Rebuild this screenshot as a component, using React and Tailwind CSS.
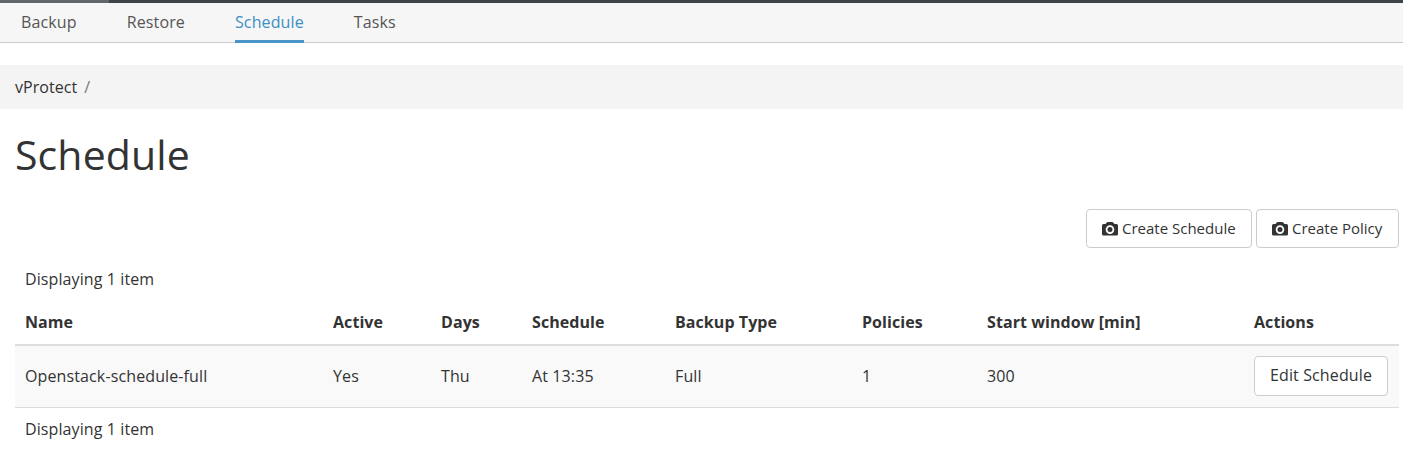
import React from "react";

const Camera = () => (
  <svg viewBox="0 0 16 14" className="mr-1 h-[14px] w-4 shrink-0" fill="#333">
    <path fillRule="evenodd" d="M1.500 2H3.600L4.700.6Q5.100 0 5.800 0h4.400q.7 0 1.100.6L12.400 2h2.100Q16 2 16 3.500v8.500q0 1.500-1.500 1.500h-13Q0 13.500 0 12V3.500Q0 2 1.500 2ZM8 3.300a4.300 4.300 0 1 0 0 8.600a4.300 4.300 0 1 0 0-8.600ZM8 5.100a2.500 2.500 0 1 1 0 5a2.500 2.500 0 1 1 0-5Z" />
  </svg>
);

const tabs = ["Backup", "Restore", "Schedule", "Tasks"];
const cols = [
  ["Name", "Openstack-schedule-full"],
  ["Active", "Yes"],
  ["Days", "Thu"],
  ["Schedule", "At 13:35"],
  ["Backup Type", "Full"],
  ["Policies", "1"],
  ["Start window [min]", "300"],
];
const grid = "grid grid-cols-[308px_108px_91px_143px_187px_125px_267px_1fr] pl-[10px]";
const button = "flex items-center rounded-[4px] border border-[#ccc] bg-white whitespace-nowrap";

export default function App() {
  return (
    <div className="h-[452px] overflow-hidden bg-white font-['Open_Sans',sans-serif] text-[16px] text-[#333]">
      <div className="flex h-[3px] bg-[#3e4449]">
        <div className="w-[109px] bg-[#636669]" />
      </div>
      <nav className="flex h-10 gap-[50px] border-b border-[#ccc] bg-[#f6f6f6] pl-[21px] tracking-[0.13px] text-[#555]">
        {tabs.map((t) => (
          <a
            key={t}
            className={
              t === "Schedule"
                ? "h-10 border-b-[3px] border-[#4795c9] leading-[38px] text-[#3b8fc4]"
                : "h-10 leading-[38px]"
            }
          >
            {t}
          </a>
        ))}
      </nav>
      <div className="mt-[22px] flex h-11 items-center gap-[7px] bg-[#f4f4f4] pl-[15px]">
        <span className="tracking-[0.05px]">vProtect</span>
        <span className="text-[#777]">/</span>
      </div>
      <main className="pr-1 pl-[15px]">
        <h1 className="mt-5 h-[50px] text-[41px] leading-[50px] tracking-[0.12px]">Schedule</h1>
        <div className="mt-[30px] flex justify-end gap-1 text-[15px]">
          <button className={`${button} h-[39px] w-[166px] pl-[15px]`}><Camera />Create Schedule</button>
          <button className={`${button} h-[39px] w-[143px] pl-[15px]`}><Camera />Create Policy</button>
        </div>
        <div className="mt-[15px] h-8 pl-[10px] leading-8 tracking-[0.1px]">Displaying 1 item</div>
        <div className={`${grid} mt-1 h-[47px] border-b-2 border-[#ddd] leading-[46px] font-bold tracking-[0.07px]`}>
          {cols.map(([h]) => <div key={h}>{h}</div>)}
          <div>Actions</div>
        </div>
        <div className={`${grid} h-[62px] items-center border-b border-[#ddd] bg-[#f9f9f9] pb-[2px] tracking-[0.12px]`}>
          {cols.map(([h, v]) => <div key={h}>{v}</div>)}
          <button className={`${button} h-10 w-[134px] pb-[2px] pl-[15px]`}>Edit Schedule</button>
        </div>
        <div className="mt-[5px] h-8 pl-[10px] leading-8 tracking-[0.1px]">Displaying 1 item</div>
      </main>
    </div>
  );
}
